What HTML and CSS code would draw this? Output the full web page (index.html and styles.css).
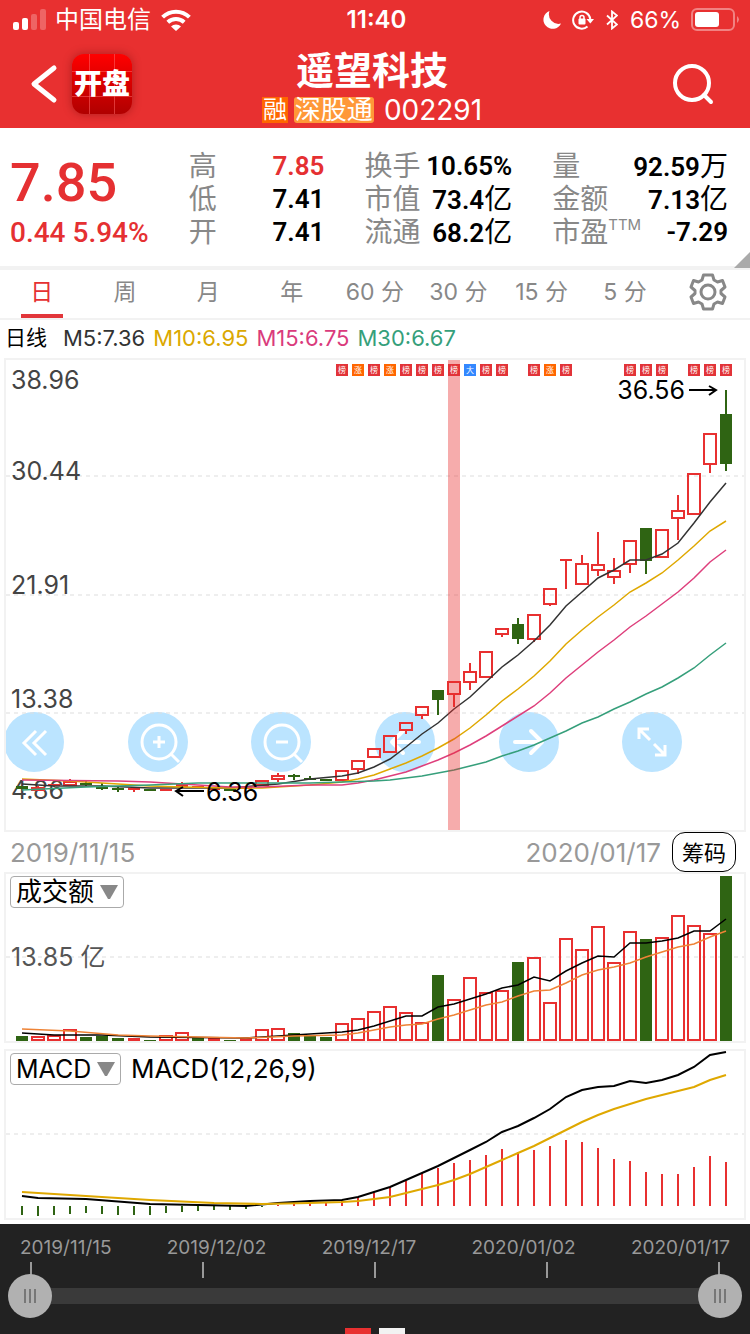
FILE: index.html
```html
<!DOCTYPE html>
<html lang="zh-CN">
<head>
<meta charset="utf-8">
<meta name="viewport" content="width=device-width, initial-scale=1">
<title>遥望科技 002291</title>
<link rel="stylesheet" href="styles.css">
</head>
<body>
<header class="top">
  <div class="status">
    <div class="status-left">
      <svg class="signal" width="32" height="22" viewBox="0 0 32 22" fill="#fff">
        <rect x="0" y="13" width="6" height="8" rx="2"/><rect x="9" y="9" width="6" height="12" rx="2"/>
        <rect x="18" y="5" width="6" height="16" rx="2" opacity=".25"/><rect x="27" y="0" width="6" height="21" rx="2" opacity=".25"/>
      </svg>
      <span>中国电信</span>
      <svg width="30" height="22" viewBox="0 0 30 22" fill="none" stroke="#fff" stroke-width="4">
        <path d="M1.600 8.200A19 19 0 0 1 28.400 8.200"/><path d="M6.800 13.200A12 12 0 0 1 23.200 13.200"/>
        <path d="M10 17.500A7 7 0 0 1 20 17.500L15 22Z" fill="#fff" stroke="none"/>
      </svg>
    </div>
    <time class="clock">11:40</time>
    <div class="status-right">
      <svg width="20" height="20" viewBox="0 0 20 20" fill="#fff"><path d="M7.500 1A9.200 9.200 0 1 0 19 13.500A9.600 9.600 0 0 1 7.500 1Z"/></svg>
      <svg class="lock" width="22" height="20" viewBox="0 0 22 20" fill="none" stroke="#fff" stroke-width="2">
        <path d="M15.500 16.500A8.600 8.600 0 1 1 18.300 9"/><path d="M14.500 9H22L18.300 13.500Z" fill="#fff" stroke="none"/>
        <rect x="6.500" y="8.500" width="7" height="6" rx="1" fill="#fff" stroke="none"/><path d="M8 9V7.500A2 2 0 0 1 12 7.500V9" stroke-width="1.500"/>
      </svg>
      <svg class="bt" width="12" height="20" viewBox="0 0 12 20" fill="none" stroke="#fff" stroke-width="1.800"><path d="M1 5.500L11 14.500L6 18.500V1.500L11 5.500L1 14.500"/></svg>
      <span class="percent">66%</span>
      <svg width="49" height="24" viewBox="0 0 49 24"><rect x="1" y="1" width="42" height="21" rx="5" fill="none" stroke="#fff" stroke-opacity=".4" stroke-width="2"/><rect x="4" y="4" width="24" height="15" rx="3" fill="#fff"/><path d="M46 8Q50 11.500 46 15Z" fill="#fff" opacity=".4"/></svg>
    </div>
  </div>
  <div class="nav">
    <div class="nav-left">
      <button class="plain" aria-label="返回"><svg width="28" height="40" viewBox="0 0 28 40" fill="none" stroke="#fff" stroke-width="5" stroke-linecap="round" stroke-linejoin="round"><path d="M24 4L4 20L24 36"/></svg></button>
      <div class="logo"><span>开盘</span></div>
    </div>
    <div class="heading">
      <h1>遥望科技</h1>
      <p class="code"><span class="tag margin-tag">融</span><span class="tag connect-tag">深股通</span><span>002291</span></p>
    </div>
    <button class="plain search" aria-label="搜索"><svg width="42" height="42" viewBox="0 0 42 42" fill="none" stroke="#fff" stroke-width="4" stroke-linecap="round"><circle cx="20" cy="20" r="17"/><path d="M32 32L39 39"/></svg></button>
  </div>
</header>
<main>
  <section class="quote">
    <div class="price"><strong>7.85</strong><span>0.44 5.94%</span></div>
    <dl><div><dt>高</dt><dd class="up">7.85</dd></div><div><dt>低</dt><dd>7.41</dd></div><div><dt>开</dt><dd>7.41</dd></div></dl>
    <dl><div><dt>换手</dt><dd>10.65%</dd></div><div><dt>市值</dt><dd>73.4<i>亿</i></dd></div><div><dt>流通</dt><dd>68.2<i>亿</i></dd></div></dl>
    <dl><div><dt>量</dt><dd>92.59<i>万</i></dd></div><div><dt>金额</dt><dd>7.13<i>亿</i></dd></div><div><dt>市盈<sup>TTM</sup></dt><dd>-7.29</dd></div></dl>
    <span class="corner"></span>
  </section>
  <nav class="tabs">
    <button class="active">日</button><button>周</button><button>月</button><button>年</button><button>60 分</button><button>30 分</button><button>15 分</button><button>5 分</button>
    <button aria-label="设置"><svg width="38" height="38" viewBox="-19 -19 38 38" fill="none" stroke="#888" stroke-width="3" stroke-linejoin="round"><circle r="7"/><path d="M-4.500 -17H4.500L6 -12L9.500 -10L14.500 -11.500L17 -5L13 -1.500V1.500L17 5L14.500 11.500L9.500 10L6 12L4.500 17H-4.500L-6 12L-9.500 10L-14.500 11.500L-17 5L-13 1.500V-1.500L-17 -5L-14.500 -11.500L-9.500 -10L-6 -12Z"/></svg></button>
  </nav>
  <div class="averages"><b>日线</b><span class="m5">M5:7.36</span><span class="m10">M10:6.95</span><span class="m15">M15:6.75</span><span class="m30">M30:6.67</span></div>
  <section class="panel">
    <div class="tools">
      <button aria-label="收起"><svg viewBox="0 0 60 60"><path d="M32 19L20 31L32 43M42 19L30 31L42 43"/></svg></button>
      <button aria-label="放大"><svg viewBox="0 0 60 60"><circle cx="31" cy="30" r="17"/><path d="M31 24V36M25 30H37M43 42L51 50"/></svg></button>
      <button aria-label="缩小"><svg viewBox="0 0 60 60"><circle cx="31" cy="30" r="17"/><path d="M25 30H37M43 42L51 50"/></svg></button>
      <button aria-label="左移"><svg class="bold" viewBox="0 0 60 60"><path d="M44 30H17M28 19L17 30L28 41"/></svg></button>
      <button aria-label="右移"><svg class="bold" viewBox="0 0 60 60"><path d="M16 30H43M32 19L43 30L32 41"/></svg></button>
      <button aria-label="全屏"><svg viewBox="0 0 60 60"><path d="M17 27V17H27M17 17L28 28M43 33V43H33M43 43L32 32"/></svg></button>
    </div>
    <svg id="price-chart" class="chart" viewBox="6 360 738 470" role="img" aria-label="日K线图"></svg>
  </section>
  <div class="range"><time>2019/11/15</time><time class="range-end">2020/01/17</time><button>筹码</button></div>
  <section class="panel">
    <div class="picker-row"><label class="picker amount"><select aria-label="副图指标一"><option>成交额</option></select><svg width="18" height="15" viewBox="0 0 18 15"><path d="M0 0H18L10 14H8Z"/></svg></label></div>
    <svg id="volume-chart" class="chart" viewBox="6 874 738 167" role="img" aria-label="成交额图"></svg>
  </section>
  <section class="panel macd-panel">
    <div class="picker-row"><label class="picker macd"><select aria-label="副图指标二"><option>MACD</option></select><svg width="18" height="15" viewBox="0 0 18 15"><path d="M0 0H18L10 14H8Z"/></svg></label><span>MACD(12,26,9)</span></div>
    <svg id="macd-chart" class="chart" viewBox="6 1051 738 167" role="img" aria-label="MACD图"></svg>
  </section>
</main>
<footer class="timeline">
  <div class="dates"><time>2019/11/15</time><time>2019/12/02</time><time>2019/12/17</time><time>2020/01/02</time><time>2020/01/17</time></div>
  <div class="ticks"><i></i><i></i><i></i><i></i><i></i></div>
  <div class="slider"><input type="range" aria-label="开始日期" min="0" max="44" value="0"><input type="range" aria-label="结束日期" min="0" max="44" value="44"></div>
  <div class="pages"><i class="current"></i><i></i></div>
</footer>
<script src="charts.js"></script>
</body>
</html>
```
FILE: styles.css
```css
* { box-sizing: border-box; }
body { margin: 0; background: #fff; color: #000; font-family: Inter, "Noto Sans CJK SC", sans-serif; }
button, select { font: inherit; color: inherit; }
svg { display: block; }
h1, p, dl, dd { margin: 0; }
.plain { padding: 0; border: 0; background: none; }

.top { background: #e83030; color: #fff; }
.status { display: grid; grid-template-columns: 1fr auto 1fr; align-items: center; height: 40px; padding: 0 10px 0 13px; font-size: 24px; line-height: 40px; }
.status-left, .status-right { display: flex; align-items: center; }
.status-left { gap: 10px; }
.signal { overflow: visible; }
.clock { font-size: 24px; font-weight: 600; }
.status-right { justify-content: flex-end; gap: 10px; }
.percent { font-size: 23px; }
.bt { margin: 0 2px; }
.nav { display: grid; grid-template-columns: 1fr auto 1fr; align-items: center; height: 88px; padding: 0 36px 0 30px; }
.nav-left { display: flex; align-items: center; gap: 14px; }
.logo { display: grid; place-items: center; width: 60px; height: 60px; border-radius: 12px; font-size: 28px; font-weight: 900; line-height: 60px; box-shadow: 0 0 10px rgba(90, 0, 0, .4);
  background: linear-gradient(90deg, transparent 17px, #ff666688 17px, #ff666688 18px, transparent 18px, transparent 42px, #ff666688 42px, #ff666688 43px, transparent 43px), linear-gradient(transparent 17px, #ff666688 17px, #ff666688 18px, transparent 18px, transparent 42px, #ff666688 42px, #ff666688 43px, transparent 43px), linear-gradient(#f00, #b00000); }
.heading { text-align: center; }
h1 { font-size: 38px; font-weight: 700; line-height: 44px; margin-top: 8px; }
.code { display: flex; align-items: center; font-size: 28px; line-height: 36px; }
.tag { height: 26px; line-height: 26px; text-align: center; }
.margin-tag { width: 26px; margin-right: 6px; background: #f60; font-size: 24px; }
.connect-tag { width: 80px; margin-right: 10px; border-radius: 3px; background: #ff9838; font-size: 26px; }
.search { justify-self: end; }

.quote { position: relative; display: grid; grid-template-columns: 138fr 136fr 148fr 176fr; column-gap: 40px; padding: 22px 22px 17px 10px; border-bottom: 4px solid #f2f2f2; line-height: 33px; }
.price { color: #e53032; font-family: Roboto, sans-serif; font-weight: 500; white-space: nowrap; }
.price strong { display: block; font-size: 54px; line-height: 66px; font-weight: 500; }
.price span { display: block; font-size: 28px; }
dl div { display: flex; justify-content: space-between; height: 33px; white-space: nowrap; }
dt { color: #888; font-size: 28px; }
dd { font-family: Roboto, "Noto Sans CJK SC", sans-serif; font-size: 26px; font-weight: 600; }
dd i { font-size: 28px; font-style: normal; font-weight: 400; }
.up { color: #e53032; }
sup { font-size: 15px; line-height: 15px; vertical-align: 12px; }
.corner { position: absolute; right: 0; bottom: -2px; border: 8px solid transparent; border-right-color: #aaa; border-bottom-color: #aaa; }

.tabs { display: grid; grid-template-columns: repeat(9, 1fr); height: 50px; border-bottom: 2px solid #f2f2f2; }
.tabs button { position: relative; display: grid; place-items: center; padding: 0 0 4px; border: 0; background: none; color: #888; font-size: 23px; line-height: 44px; white-space: nowrap; }
.tabs .active { color: #e53032; }
.tabs .active::after { content: ""; position: absolute; left: 25%; right: 25%; bottom: 0; height: 4px; background: #e2363a; }
.averages { display: flex; align-items: center; gap: 8px; height: 38px; padding-left: 5px; font-size: 22px; line-height: 36px; padding-bottom: 2px; }
.averages b { margin-right: 8px; font-size: 21px; font-weight: 400; }
.m5 { color: #333; }
.m10 { color: #dba800; }
.m15 { color: #da3b7c; }
.m30 { color: #369f7b; }

.panel { position: relative; margin: 0 4px; border: 2px solid #f2f2f2; overflow: hidden; }
.macd-panel { margin: 6px 4px 4px; }
.chart { position: relative; width: 100%; height: auto; pointer-events: none; }
.tools { position: absolute; left: -2px; right: -2px; bottom: 58px; display: grid; grid-template-columns: repeat(6, 1fr); }
.tools button { width: 60px; height: 60px; padding: 0; border: 0; border-radius: 50%; background: #bbe4ff; }
.tools svg { fill: none; stroke: #fff; stroke-width: 3; }
.tools .bold { stroke-width: 4; stroke-linecap: round; stroke-linejoin: round; }
.range { display: flex; align-items: center; height: 40px; padding: 0 14px 0 10px; color: #999; font-size: 26px; }
.range-end { margin-left: auto; }
.range button { width: 64px; height: 40px; margin-left: 11px; padding: 0 0 2px; border: 1px solid #000; border-radius: 13px; background: #fff; color: #000; font-size: 22px; }
.picker-row { position: absolute; z-index: 1; top: 2px; left: 4px; display: flex; align-items: center; gap: 10px; font-size: 26px; line-height: 32px; }
.picker { position: relative; height: 32px; }
.amount { width: 114px; }
.macd { width: 111px; }
.picker select { width: 100%; height: 32px; padding: 0 0 0 5px; border: 1px solid #aaa; border-radius: 4px; background: #fff; appearance: none; line-height: 30px; }
.macd select { font-size: 25px; }
.picker svg { position: absolute; right: 6px; top: 9px; fill: #888; pointer-events: none; }

.timeline { padding-top: 14px; background: #222; color: #999; font-size: 19px; }
.dates { display: flex; justify-content: space-between; padding: 0 20px; line-height: 20px; }
.ticks { display: flex; justify-content: space-between; height: 16px; margin-top: 4px; padding: 0 30px; }
.ticks i { width: 2px; background: #999; }
.slider { position: relative; display: grid; height: 44px; margin: -4px 8px 0; }
.slider::before { content: ""; position: absolute; left: 22px; right: 22px; top: 14px; height: 16px; background: #3a3a3a; }
.slider input { grid-area: 1 / 1; position: relative; width: 100%; height: 44px; margin: 0; appearance: none; background: none; pointer-events: none; }
.slider input::-webkit-slider-thumb { appearance: none; width: 44px; height: 44px; border-radius: 50%; pointer-events: auto; background: linear-gradient(90deg, #777 2px, transparent 2px, transparent 5px, #777 5px, #777 7px, transparent 7px, transparent 10px, #777 10px) center / 12px 14px no-repeat #b1b1b1; }
.pages { display: flex; justify-content: center; gap: 8px; margin-top: 10px; }
.pages i { width: 26px; height: 6px; background: #f2f2f2; }
.pages .current { background: #e83030; }
```
FILE: charts.js
```js
const RED = '#e83030', GREEN = '#2f6413';
const xAt = i => 22 + 16 * i;

function add(svg, tag, attrs, text) {
  const el = document.createElementNS('http://www.w3.org/2000/svg', tag);
  for (const key in attrs) el.setAttribute(key, attrs[key]);
  if (text) el.textContent = text;
  svg.appendChild(el);
}
function grid(svg, y) {
  add(svg, 'path', { d: `M6 ${y}H744`, stroke: '#ddd', 'stroke-width': 1, 'stroke-dasharray': '4 4' });
}
function label(svg, x, y, text, fill = '#444', anchor = 'start') {
  add(svg, 'text', { x, y, fill, 'font-size': 25, 'text-anchor': anchor }, text);
}
// head: sparse [index, y] pairs; tail: one y for each following index from `start`
function line(svg, head, start, tail, stroke, width) {
  const points = head.concat(tail.map((y, k) => [start + k, y]));
  add(svg, 'polyline', { points: points.map(p => xAt(p[0]) + ',' + p[1]).join(' '), fill: 'none', stroke, 'stroke-width': width });
}
function box(svg, i, up, top, bottom) {
  const x = xAt(i), h = bottom - top;
  if (up && h > 3) add(svg, 'rect', { x: x - 6, y: top + 1, width: 12, height: h - 2, fill: 'none', stroke: RED, 'stroke-width': 2 });
  else add(svg, 'rect', { x: x - 6, y: top, width: 12, height: Math.max(h, 1), fill: up ? RED : GREEN });
}

// price: [rising, body top, body bottom, high, low]
const candles = [
  [0,786,789,786,789],[1,787,791,786,791],[1,784,786,784,787],[1,781,786,779,786],[0,783,785,781,786],
  [0,787,789,783,790],[0,788,790,786,792],[1,788,790,788,792],[0,789,791,789,791],[1,789,791,789,791],
  [1,784,787,782,787],[1,786,788,786,788],[1,788,790,787,790],[0,789,791,789,791],[1,787,789,787,789],
  [1,780,786,780,786],[1,775,780,773,782],[0,775,777,774,780],[0,778,780,776,780],[0,779,781,779,781],
  [1,770,781,770,781],[1,760,770,760,774],[1,748,758,748,758],[1,735,753,735,753],[1,722,731,722,734],
  [1,706,716,706,719],[0,690,700,690,715],[1,681,695,681,707],[1,671,683,663,690],[1,651,678,651,678],
  [1,628,635,628,637],[0,624,639,618,644],[1,614,640,614,642],[1,588,605,588,606],[1,559,561,559,589],
  [1,563,585,555,585],[1,564,571,532,576],[1,570,578,558,584],[1,540,565,540,573],[0,528,561,528,574],
  [1,529,558,529,558],[1,510,519,495,540],[1,473,515,473,515],[1,433,465,433,473],[0,414,464,390,471]
];
const price = document.getElementById('price-chart');
[476, 595, 713].forEach(y => grid(price, y));
[['38.96', 389], ['30.44', 480], ['21.91', 594], ['13.38', 708], ['4.86', 799]].forEach(l => label(price, 11, l[1], l[0]));
candles.forEach(([up, top, bottom, high, low], i) => {
  const x = xAt(i);
  add(price, 'path', { d: `M${x} ${high}V${top}M${x} ${bottom}V${low}`, stroke: up ? RED : GREEN, 'stroke-width': 2 });
  box(price, i, up, top, bottom);
});
line(price, [[0,784],[2,786],[5,786],[8,788],[13,788],[16,784],[18,779],[20,776],[21,773]], 22,
  [767,759,747,734,723,709,697,682,667,655,641,625,606,592,578,570,560,560,554,543,523,502,483], '#333', 1.5);
line(price, [[0,779],[3,781],[5,783],[8,786],[10,787],[13,788],[15,788],[18,785],[20,782],[21,779]], 22,
  [775,769,763,756,748,739,728,715,701,689,676,661,644,630,617,605,592,583,573,560,546,531,521], '#dfa800', 1.5);
line(price, [[0,780],[6,781],[8,782],[10,784],[13,787],[15,787],[18,785],[20,785],[21,783]], 22,
  [780,776,772,766,760,753,745,736,726,716,706,693,678,665,652,640,627,616,604,592,578,562,550], '#de3f7c', 1.5);
line(price, [[0,790],[4,787],[8,785],[11,783],[15,783],[18,783],[20,782]], 22,
  [781,780,778,776,773,770,766,762,756,751,745,738,731,723,717,709,702,694,687,678,668,655,643], '#369f7b', 1.5);
label(price, 206, 801, '6.36', '#000');
label(price, 685, 399, '36.56', '#000', 'end');
add(price, 'path', { d: 'M204 791H176M183 787L176 791L183 796M689 390H716M709 386L716 390L709 395', fill: 'none', stroke: '#000', 'stroke-width': 2 });
const marks = { 20:'榜',21:'涨',22:'榜',23:'涨',24:'榜',25:'榜',26:'榜',27:'榜',28:'大',29:'榜',30:'榜',32:'榜',33:'涨',34:'榜',38:'榜',39:'榜',40:'榜',42:'榜',43:'榜',44:'榜' };
const markColors = { '榜': '#e23338', '涨': '#f60', '大': '#38f' };
add(price, 'rect', { x: 448, y: 360, width: 12, height: 470, fill: RED, opacity: 0.4 });
for (const i in marks) {
  add(price, 'rect', { x: xAt(i) - 6, y: 364, width: 12, height: 12, fill: markColors[marks[i]] });
  add(price, 'text', { x: xAt(i), y: 373, fill: '#fff', 'font-size': 8, 'text-anchor': 'middle' }, marks[i]);
}

// turnover bar tops
const tops = [1036,1036,1035,1029,1037,1036,1038,1038,1040,1035,1032,1038,1038,1040,1038,1029,1028,1033,1036,1037,1023,1018,1011,1006,1012,1022,975,999,977,992,990,962,957,1002,938,949,926,962,931,939,937,915,925,933,876];
const falling = [0,4,5,6,8,11,13,17,18,19,26,31,39,44];
const volume = document.getElementById('volume-chart');
grid(volume, 957);
label(volume, 11, 966, '13.85 亿', '#555');
tops.forEach((top, i) => box(volume, i, !falling.includes(i), top, 1041));
line(volume, [[0,1033],[2,1035],[5,1035],[8,1037],[14,1038],[16,1036],[18,1034],[20,1032],[21,1030]], 22,
  [1026,1021,1016,1016,1007,1004,999,994,988,985,977,981,971,963,956,957,943,943,941,938,931,931,919], '#000', 1.5);
line(volume, [[0,1029],[3,1031],[6,1035],[8,1036],[14,1038],[17,1036],[20,1035],[21,1033]], 22,
  [1030,1027,1025,1024,1019,1015,1010,1005,1002,996,991,990,983,975,970,967,963,957,952,947,944,937,931], '#ee8336', 1.5);

const bars = [1215,1216,1215,1214,1213,1214,1215,1215,1215,1213,1212,1211,1210,1210,1209,1207,1205,1204,1203,1203,1201,1197,1193,1187,1181,1173,1168,1163,1160,1155,1149,1152,1150,1146,1140,1142,1148,1159,1161,1172,1174,1174,1167,1156,1162];
const macd = document.getElementById('macd-chart');
grid(macd, 1134);
bars.forEach((y, i) => add(macd, 'path', { d: `M${xAt(i)} 1206V${y}`, stroke: y > 1206 ? GREEN : RED, 'stroke-width': 2 }));
line(macd, [[0,1196],[1,1198],[4,1199],[8,1204],[14,1206],[16,1203],[18,1201],[20,1200],[21,1197]], 22,
  [1192,1187,1180,1173,1166,1158,1150,1142,1132,1126,1118,1109,1097,1090,1087,1086,1081,1083,1080,1075,1067,1055,1052], '#000', 2);
line(macd, [[0,1192],[4,1196],[8,1200],[12,1203],[15,1204],[18,1203],[20,1202],[21,1201]], 22,
  [1199,1197,1193,1189,1185,1180,1174,1167,1160,1153,1146,1138,1130,1122,1115,1109,1104,1099,1095,1091,1087,1080,1075], '#dfa800', 2);
```
